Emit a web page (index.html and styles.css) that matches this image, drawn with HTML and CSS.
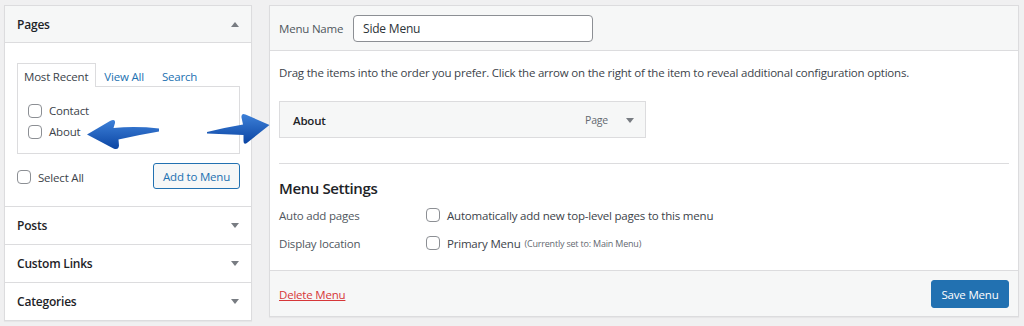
FILE: index.html
```html
<!DOCTYPE html>
<html lang="en">
<head>
<meta charset="utf-8">
<title>Menus</title>
<link rel="stylesheet" href="styles.css">
</head>
<body>
<div class="page">
  <div class="sidebar">
    <div class="acc open">
      <h3 class="acc-title">Pages <span class="tri up"></span></h3>
      <div class="acc-body">
        <ul class="tabs">
          <li class="tab active">Most Recent</li>
          <li class="tab">View All</li>
          <li class="tab">Search</li>
        </ul>
        <div class="tab-panel">
          <label class="check"><span class="cb"></span>Contact</label>
          <label class="check"><span class="cb"></span>About</label>
        </div>
        <div class="actions">
          <label class="check select-all"><span class="cb"></span>Select All</label>
          <button class="btn-secondary">Add to Menu</button>
        </div>
      </div>
    </div>
    <div class="acc"><h3 class="acc-title">Posts <span class="tri down"></span></h3></div>
    <div class="acc"><h3 class="acc-title">Custom Links <span class="tri down"></span></h3></div>
    <div class="acc"><h3 class="acc-title">Categories <span class="tri down"></span></h3></div>
  </div>

  <div class="editor">
    <div class="editor-header">
      <label class="name-label">Menu Name</label>
      <div class="name-input">Side Menu</div>
    </div>
    <div class="editor-body">
      <p class="drag-text">Drag the items into the order you prefer. Click the arrow on the right of the item to reveal additional configuration options.</p>
      <div class="menu-item">
        <span class="item-title">About</span>
        <span class="item-controls"><span class="item-type">Page</span><span class="tri down"></span></span>
      </div>
      <div class="settings">
        <h3 class="settings-title">Menu Settings</h3>
        <div class="setting-row">
          <span class="setting-label">Auto add pages</span>
          <label class="check"><span class="cb"></span>Automatically add new top-level pages to this menu</label>
        </div>
        <div class="setting-row">
          <span class="setting-label">Display location</span>
          <label class="check"><span class="cb"></span>Primary Menu <span class="note">(Currently set to: Main Menu)</span></label>
        </div>
      </div>
    </div>
    <div class="editor-footer">
      <a class="delete-link" href="#">Delete Menu</a>
      <button class="btn-primary">Save Menu</button>
    </div>
  </div>
</div>

<svg class="arrows" width="1024" height="326" viewBox="0 0 1024 326" aria-hidden="true">
  <defs>
    <linearGradient id="ag" x1="0" y1="0" x2="0" y2="1">
      <stop offset="0" stop-color="#3d80d8"/>
      <stop offset="1" stop-color="#0b45a3"/>
    </linearGradient>
  </defs>
  <path fill="url(#ag)" d="M87,134.5 L110,121 Q115.5,118.5 115,123 L113.5,128 Q136,126 159,128.5 L159,131.5 Q138,135 118.5,139.5 L119,145.5 Q118.5,150.5 113.5,148.5 Z"/>
  <path fill="url(#ag)" d="M207,132 Q225,127.5 243,124.5 L241.5,117.5 Q241,112.5 245.5,114.5 L269.5,125 L247.5,142.5 Q243.5,145.5 243.5,141 L243.5,135 Q225,134 207,133.5 Z"/>
</svg>
</body>
</html>
```

FILE: styles.css
```css
* { box-sizing: border-box; }

html, body {
  margin: 0;
  padding: 0;
}

body {
  background: #f0f0f1;
  font-family: "Open Sans", "Noto Sans", sans-serif;
  font-size: 11.5px;
  letter-spacing: -0.2px;
  color: #3c434a;
  width: 1024px;
  height: 326px;
  overflow: hidden;
  position: relative;
}

.page {
  display: flex;
  align-items: flex-start;
  gap: 17px;
  padding: 5px 5px 0 4px;
}

/* ---------- Sidebar ---------- */
.sidebar {
  width: 248px;
  flex: none;
  background: #fff;
  border: 1px solid #dcdcde;
  box-shadow: 0 1px 1px rgba(0,0,0,0.04);
}

.acc + .acc { border-top: 1px solid #dcdcde; }

.acc-title {
  margin: 0;
  height: 37px;
  display: flex;
  align-items: center;
  justify-content: space-between;
  padding: 0 12px;
  font-size: 12px;
  font-weight: 600;
  color: #1d2327;
}

.acc.open .acc-title {
  padding-top: 1px;
  background: #f6f7f7;
  border-bottom: 1px solid #dcdcde;
}

.tri {
  width: 0;
  height: 0;
  border-left: 4px solid transparent;
  border-right: 4px solid transparent;
  display: inline-block;
}
.tri.up { border-bottom: 5px solid #787c82; }
.tri.down { border-top: 5px solid #787c82; }

.acc-body {
  padding: 20px 11px 17px 12px;
}

.tabs {
  list-style: none;
  margin: 0 0 -1px;
  padding: 0;
  display: flex;
  position: relative;
  z-index: 1;
}

.tab {
  height: 24px;
  line-height: 25px;
  padding: 0 7px 0 6px;
  color: #2271b1;
  border: 1px solid transparent;
  border-bottom: none;
}
.tab + .tab { padding: 0 9px 0 7px; }

.tab.active {
  color: #3c434a;
  background: #fff;
  border-color: #dcdcde;
}

.tab-panel {
  border: 1px solid #dcdcde;
  padding: 13px 10px 11px;
  height: 68px;
}

.check {
  display: flex;
  align-items: center;
  gap: 7px;
  height: 21px;
}

.cb {
  width: 14px;
  height: 14px;
  flex: none;
  border: 1px solid #8c8f94;
  border-radius: 4px;
  background: #fff;
}

.actions {
  margin-top: 9px;
  display: flex;
  align-items: center;
  justify-content: space-between;
}

.select-all {
  margin-top: 2px;
}

button {
  font-family: inherit;
  font-size: 11.5px;
  letter-spacing: -0.2px;
  cursor: pointer;
}

.btn-secondary {
  height: 26px;
  width: 87px;
  padding: 0;
  border: 1px solid #2271b1;
  border-radius: 3px;
  background: #f6f7f7;
  color: #2271b1;
}

/* ---------- Editor ---------- */
.editor {
  width: 750px;
  flex: none;
  background: #fff;
  border: 1px solid #dcdcde;
  box-shadow: 0 1px 1px rgba(0,0,0,0.04);
}

.editor-header {
  background: #f6f7f7;
  border-bottom: 1px solid #dcdcde;
  display: flex;
  align-items: center;
  padding: 9px 9px 8px;
}

.name-label {
  width: 74px;
  color: #50575e;
}

.name-input {
  width: 240px;
  height: 27px;
  line-height: 26px;
  padding: 0 9px;
  border: 1px solid #8c8f94;
  border-radius: 4px;
  background: #fff;
  color: #2c3338;
  font-size: 12px;
}

.editor-body {
  padding: 12px 9px 13px;
}

.drag-text {
  margin: 0;
  line-height: 20px;
}

.menu-item {
  margin-top: 18px;
  width: 367px;
  height: 37px;
  background: #f6f7f7;
  border: 1px solid #dcdcde;
  display: flex;
  align-items: center;
  justify-content: space-between;
  padding: 1px 11px 0 13px;
}

.item-title {
  font-weight: 600;
  color: #1d2327;
}

.item-controls {
  display: flex;
  align-items: center;
  gap: 18px;
}

.item-type {
  color: #646970;
  font-size: 10.5px;
}

.settings {
  margin-top: 25px;
  border-top: 1px solid #dcdcde;
}

.settings-title {
  margin: 13px 0 2px;
  font-size: 15px;
  letter-spacing: -0.4px;
  line-height: 22px;
  font-weight: 600;
  color: #1d2327;
}

.setting-row {
  display: flex;
  align-items: center;
  height: 28px;
}

.setting-label {
  width: 147px;
  color: #50575e;
}

.note {
  font-size: 9px;
  letter-spacing: -0.2px;
  color: #646970;
  margin-left: -3px;
}

.editor-footer {
  background: #f6f7f7;
  border-top: 1px solid #dcdcde;
  display: flex;
  align-items: center;
  justify-content: space-between;
  padding: 9px 9px 8px;
}

.delete-link {
  color: #d63638;
  text-decoration: underline;
}

.btn-primary {
  height: 28px;
  width: 78px;
  padding: 0;
  border: 1px solid #2271b1;
  border-radius: 3px;
  background: #2271b1;
  color: #fff;
}

/* ---------- Arrows overlay ---------- */
.arrows {
  position: absolute;
  left: 0;
  top: 0;
  pointer-events: none;
}
```
